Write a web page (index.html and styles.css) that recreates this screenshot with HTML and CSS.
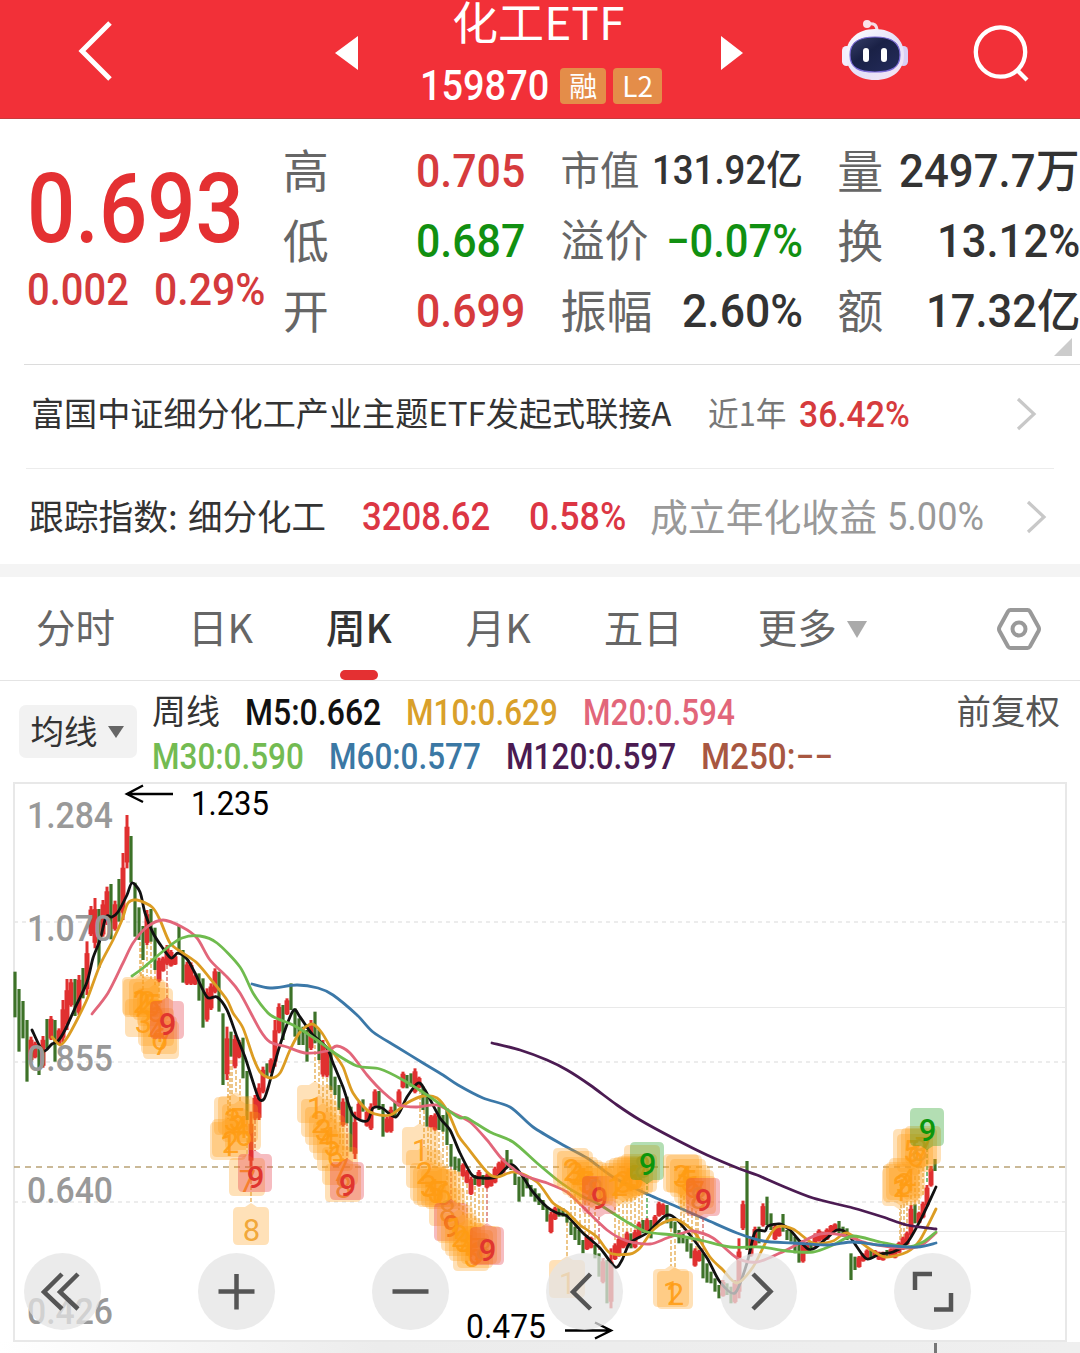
FILE: index.html
```html
<!DOCTYPE html>
<html lang="zh-CN">
<head>
<meta charset="utf-8">
<title>化工ETF 159870</title>
<link rel="stylesheet" href="styles.css">
</head>
<body>
<header class="topbar">
  <svg class="back" width="38" height="62" viewBox="0 0 38 62"><path d="M33 3 5 31 33 59" fill="none" stroke="#fff" stroke-width="5"/></svg>
  <svg class="prev" width="23" height="34" viewBox="0 0 23 34"><path d="M23 0V34L0 17Z" fill="#fff"/></svg>
  <div class="title">
    <h1><span data-fit="172">化工ETF</span></h1>
    <div class="code"><span class="num" data-fit="129">159870</span><i>融</i><i>L2</i></div>
  </div>
  <svg class="next" width="23" height="34" viewBox="0 0 23 34"><path d="M0 0V34L22 17Z" fill="#fff"/></svg>
  <svg class="robot" width="68" height="64" viewBox="0 0 68 64">
    <defs>
      <linearGradient id="shell" x1="0" y1="0" x2="1" y2="1"><stop offset="0" stop-color="#fff"/><stop offset=".55" stop-color="#e4e0f8"/><stop offset="1" stop-color="#f6e6f4"/></linearGradient>
      <linearGradient id="face" x1="0" y1="0" x2="1" y2="1"><stop offset="0" stop-color="#38406a"/><stop offset=".4" stop-color="#1a2146"/><stop offset="1" stop-color="#242c5c"/></linearGradient>
    </defs>
    <path d="M27 6Q36 4 36 13" fill="none" stroke="#f4dce6" stroke-width="3"/>
    <circle cx="26" cy="6" r="4" fill="#fbe3ea"/>
    <rect x="1" y="28" width="9" height="20" rx="4.500" fill="#f3ecfc"/><rect x="58" y="28" width="9" height="20" rx="4.500" fill="#d9cff5"/>
    <path d="M34 11C52 11 63 22 63 37S52 62 34 62 5 52 5 37 16 11 34 11Z" fill="url(#shell)"/>
    <path d="M34 19C50 19 59 24 59 37S50 54 34 54 9 50 9 37 18 19 34 19Z" fill="url(#face)" stroke="#7c6bd8" stroke-width="1.200"/>
    <rect x="22" y="30" width="6" height="14" rx="3" fill="#fff"/><rect x="40" y="30" width="6" height="14" rx="3" fill="#fff"/>
  </svg>
  <svg class="search" width="58" height="58" viewBox="0 0 58 58"><g fill="none" stroke="#fff" stroke-width="4.300"><circle cx="27.500" cy="27" r="24.700"/><path d="M43 44 54 55"/></g></svg>
</header>

<section class="quote">
  <div class="last">
    <div class="price num"><span data-fit="217">0.693</span></div>
    <div class="change num"><span data-fit="102">0.002</span><span data-fit="111">0.29%</span></div>
  </div>
  <dl class="stats first">
    <dt>高</dt><dd class="num up"><span data-fit="109">0.705</span></dd>
    <dt>低</dt><dd class="num down"><span data-fit="109">0.687</span></dd>
    <dt>开</dt><dd class="num up"><span data-fit="109">0.699</span></dd>
  </dl>
  <dl class="stats second">
    <dt class="s">市值</dt><dd class="num s"><span data-fit="151">131.92亿</span></dd>
    <dt class="m">溢价</dt><dd class="num down m"><span data-fit="137">−0.07%</span></dd>
    <dt>振幅</dt><dd class="num"><span data-fit="121">2.60%</span></dd>
  </dl>
  <dl class="stats third">
    <dt>量</dt><dd class="num"><span data-fit="181">2497.7万</span></dd>
    <dt>换</dt><dd class="num"><span data-fit="143">13.12%</span></dd>
    <dt>额</dt><dd class="num"><span data-fit="154">17.32亿</span></dd>
  </dl>
  <b class="corner"></b>
</section>

<section class="link fund">
  <span class="name" data-fit="640">富国中证细分化工产业主题ETF发起式联接A</span>
  <span class="period" data-fit="78">近1年</span>
  <span class="num up" data-fit="111">36.42%</span>
  <svg width="22" height="34" viewBox="0 0 22 34"><path d="M2 2 18 17 2 32" fill="none" stroke="#c8c8c8" stroke-width="3.200"/></svg>
</section>
<section class="link index">
  <span class="label" data-fit="149">跟踪指数:</span>
  <span class="name" data-fit="138">细分化工</span>
  <span class="num up" data-fit="128">3208.62</span>
  <span class="num up rate" data-fit="97">0.58%</span>
  <span class="since" data-fit="227">成立年化收益</span>
  <span class="num annual" data-fit="97">5.00%</span>
  <svg width="22" height="34" viewBox="0 0 22 34"><path d="M2 2 18 17 2 32" fill="none" stroke="#c8c8c8" stroke-width="3.200"/></svg>
</section>

<nav class="tabs">
  <a>分时</a><a>日K</a><a class="on">周K</a><a>月K</a><a>五日</a><a>更多<b></b></a>
  <svg width="46" height="44" viewBox="0 0 46 44"><g fill="none" stroke="#999" stroke-width="4"><path d="M14.500 3H31.500Q33 3 34 4.500L42.500 20Q43.500 22 42.500 24L34 39.500Q33 41 31.500 41H14.500Q13 41 12 39.500L3.500 24Q2.500 22 3.500 20L12 4.500Q13 3 14.500 3Z"/><circle cx="23" cy="22" r="6.500"/></g></svg>
</nav>

<section class="averages">
  <button class="pick">均线<b></b></button>
  <div class="legend">
    <div><em>周线</em><span class="num k5" data-fit="136">M5:0.662</span><span class="num k10" data-fit="152">M10:0.629</span><span class="num k20" data-fit="152">M20:0.594</span></div>
    <div><span class="num k30" data-fit="152">M30:0.590</span><span class="num k60" data-fit="152">M60:0.577</span><span class="num k120" data-fit="170">M120:0.597</span><span class="num k250" data-fit="132">M250:−−</span></div>
  </div>
  <span class="adjust">前复权</span>
</section>

<main class="chart">
  <svg id="kline" width="1080" height="572" viewBox="0 781 1080 572"></svg>
  <div class="tools">
    <button><svg viewBox="0 0 77 77"><path d="M38 21 20 39 38 56M54 21 36 39 54 56"/></svg></button>
    <button><svg viewBox="0 0 77 77"><path d="M38.500 21V56.500M20.500 38.500H56.500"/></svg></button>
    <button><svg viewBox="0 0 77 77"><path d="M20.500 38.500H56.500"/></svg></button>
    <button><svg viewBox="0 0 77 77"><path d="M44.500 21 27 39 44.500 56"/></svg></button>
    <button><svg viewBox="0 0 77 77"><path d="M33 21 50.500 38.500 33 56"/></svg></button>
    <button><svg viewBox="0 0 77 77"><path d="M38 21H21V37M57 40V56.500H40"/></svg></button>
  </div>
</main>
<script src="chart.js"></script>
</body>
</html>
```
FILE: styles.css
```css
* { box-sizing: border-box; margin: 0; padding: 0; }
body { width: 1080px; height: 1353px; overflow: hidden; background: #fff; color: #333; font-family: "Noto Sans CJK SC", sans-serif; font-weight: 400; }
svg { display: block; flex: none; }
i, em { font-style: normal; }
button { border: 0; font: inherit; color: inherit; }
span { white-space: nowrap; }
.num { font-family: Roboto, "Noto Sans CJK SC", sans-serif; font-weight: 500; }
.up { color: #d63b3d; }
.down { color: #119011; }
[data-fit] { display: inline-block; transform-origin: left center; }

.topbar { display: flex; align-items: flex-start; height: 119px; background: #f23038; border-bottom: 1px solid #c93a3c; color: #fff; }
.back { margin: 20px 0 0 77px; }
.prev { margin: 36px 0 0 220px; }
.title { width: 242px; margin-left: 62px; }
h1 { height: 48px; padding-left: 32px; font-size: 45px; line-height: 42px; font-weight: 400; }
.code { display: flex; align-items: center; height: 76px; font-size: 42px; line-height: 48px; }
.code i { height: 36px; padding: 0 9px; margin: -1px 0 0 11px; border-radius: 4px; background: #e48d49; font-size: 28px; line-height: 34px; }
.code i + i { margin-left: 7px; }
.next { margin: 36px 0 0 59px; }
.robot { margin: 18px 0 0 97px; }
.search { margin: 25px 0 0 64px; }

.quote { display: flex; position: relative; height: 246px; }
.quote::after { content: ""; position: absolute; left: 24px; right: 0; bottom: 0; height: 1px; background: #dcdcdc; }
.last { width: 285px; padding: 43px 0 0 27px; color: #e43032; }
.price { font-size: 96px; line-height: 94px; }
.change { display: flex; gap: 25px; margin-top: 8px; font-size: 45px; line-height: 52px; color: #d43a3c; }
.stats { display: grid; grid-template-columns: auto auto; grid-template-rows: repeat(3, 70px); justify-content: space-between; align-items: center; height: 210px; margin-top: 17px; font-size: 46px; line-height: 70px; }
dt { color: #666; margin-top: -7px; white-space: nowrap; }
dt.s { font-size: 39.500px; }
dt.m { font-size: 44px; }
dd { text-align: right; white-space: nowrap; }
dd.s { font-size: 40px; }
.first { width: 243px; margin-left: -2px; }
.second { width: 243px; margin-left: 35px; }
.third { width: 243px; margin-left: 34px; }
.corner { position: absolute; right: 8px; bottom: 9px; border: 9px solid transparent; border-right-color: #ccc; border-bottom-color: #ccc; }

.link { display: flex; align-items: center; }
.link > span { margin-top: -4px; }
.link > span.num { margin-top: 1px; }
.fund { height: 104px; margin: 0 26px; padding: 0 16px 6px 5px; border-bottom: 1px solid #ececec; font-size: 33px; }
.period { margin-left: 37px; color: #777; }
.link .num { font-size: 37px; font-weight: 500; }
.fund .num { margin-left: 12px; }
.fund svg { margin-left: auto; }
.index { height: 95px; padding: 0 32px 0 29px; font-size: 35px; }
.index .name { margin-left: 10px; }
.index .num { margin-left: 36px; font-size: 38px; color: #dc3644; }
.index .rate { margin-left: 39px; }
.since { margin-left: 24px; font-size: 38px; color: #999; }
.index .annual { margin-left: 10px; color: #999; font-weight: 400; }
.index svg { margin-left: auto; }

.tabs { display: flex; align-items: center; position: relative; height: 117px; padding: 13px 38px 0 36px; border-bottom: 1px solid #e4e4e4; background: linear-gradient(#f4f4f4 13px, #fff 13px); font-size: 39.500px; color: #666; }
.tabs a { position: relative; line-height: 60px; margin-top: -6px; white-space: nowrap; }
.tabs a:nth-child(2) { margin-left: 73px; }
.tabs a:nth-child(3) { margin-left: 73px; }
.tabs a:nth-child(4) { margin-left: 74px; }
.tabs a:nth-child(5) { margin-left: 73px; }
.tabs a:nth-child(6) { margin-left: 75px; }
.tabs svg { margin-left: auto; }
.tabs b { display: inline-block; margin: 0 0 5px 10px; border: 10px solid transparent; border-top: 17px solid #aaa; border-bottom: 0; }
.tabs .on { color: #333; font-weight: 500; }
.on::after { content: ""; position: absolute; left: 14px; bottom: -24px; width: 38px; height: 10px; border-radius: 5px; background: #e43032; }

.averages { display: flex; height: 100px; padding: 0 20px 0 19px; }
.pick { width: 118px; height: 53px; margin-top: 24px; padding: 0 2px 3px 0; border-radius: 7px; background: #f2f2f2; font-size: 33.500px; line-height: 50px; white-space: nowrap; }
.pick b { display: inline-block; margin: 0 0 6px 10px; border: 8px solid transparent; border-top: 12px solid #666; border-bottom: 0; }
.legend { margin: 10px 0 0 15px; }
.legend div { display: flex; align-items: center; height: 44px; gap: 25px; font-size: 36px; }
.legend em { margin-top: -7px; font-size: 34px; }
.adjust { margin: 3px 0 0 auto; font-size: 34.500px; line-height: 50px; color: #555; }
.k5 { color: #111; }
.k10 { color: #d9a02a; }
.k20 { color: #e2667a; }
.k30 { color: #73bb52; }
.k60 { color: #3b78a4; }
.k120 { color: #4b1b52; }
.k250 { color: #a85741; }

.chart { position: relative; height: 572px; }
.tools { position: absolute; left: 24px; top: 472px; display: flex; gap: 97px; }
.tools button { width: 77px; height: 77px; border-radius: 50%; background: rgba(228, 228, 228, .74); }
.tools path { fill: none; stroke: #555; stroke-width: 4.500; }
#kline text { font-family: Roboto, sans-serif; }
```
FILE: chart.js
```js
// Squeeze labels to the widths reserved for them.
document.querySelectorAll('[data-fit]').forEach(el => {
  const natural = el.offsetWidth, target = +el.dataset.fit;
  el.style.transform = `scaleX(${target / natural})`;
  el.style.marginRight = `${target - natural}px`;
});

const STEP = 4, LEFT = 15;
const RED = '#e03030', GREEN = '#3d7228';
// Weekly bars: colour, high-low in thirds of a pixel below the segment top.
const segments = [
  { top: 780, bars: 'g575-712 g627-815 g663-775 g720-905 r770-845 r785-835 g798-885 r768-863 g717-805 r708-780 g720-845 r745-795 r660-787 r597-750 r597-680 g597-708 r585-705 g564-655 r484-645 r378-468 r354-505 g387-563 r360-470 r320-435 g312-478 r362-452 g297-425 r219-420 r105-265 g168-308 g308-470 g382-480 g438-540 r390-495 g387-485 g443-570 r533-607 r530-575 r495-555 r510-560 r525-555 g438-510 g510-608 r545-615 r547-615' },
  { top: 960, bars: 'r45-75 g40-122 g55-203 r85-185 r70-150 r25-100 g35-155 g160-375 r200-360 g215-290 r225-325 r240-295 g233-355 g333-480 r455-620 r405-480 r370-480 r320-400 g310-350 r295-340 r180-320 r130-220 g135-240 r115-165 g70-150 g145-230 g175-255 g200-255 g210-305 r180-270 g155-250 g210-300 r240-350 r260-352 g270-390 g350-405 g375-450 r415-500 g410-490 g440-575 r455-597 r425-480 g418-455 r450-500 r430-510 r388-440 g393-450 g432-530 r470-518 r440-518 g425-470 r388-440 r335-385 g345-385 g340-380 r325-400 r350-385 g380-450 g410-500 r465-503 r460-512 g440-510 g465-515 g445-555' },
  { top: 1030, bars: 'g342-410 g380-420 g385-425 r400-440 r420-460 r440-495 g435-465 r420-470 g435-465 r430-475 r435-470 r410-460 r395-435 r385-430 g360-410 g388-420 g425-465 g440-515 g440-500 g440-475 g465-500 g475-515 g490-525 g510-540 g530-575 r545-610 r530-570 g530-560 g535-560 g550-578 g575-615 g590-630 g600-645 g630-670 r615-660 r620-655 g645-685 g670-740 r685-760 g690-820 r655-835 r640-690 r620-680 r625-655 r605-650 g610-655 r600-655 r575-625 g570-610 r565-610 g570-625 r555-595' },
  { top: 1090, bars: 'r335-380 r340-375 g345-400 g385-415 g395-430 g420-460 g430-460 g445-485 g460-505 r475-530 r480-515 g490-565 g520-578 g545-580 g565-605 g585-625 r570-620 g580-615 g590-640 r570-640 r445-625 r332-420 g213-480 r440-500 r410-470 g410-460 r340-410 g320-405 g370-420 r405-450 r410-440 g372-425 g420-450 g425-455 g440-490 g450-518 r450-518 r455-490 g455-475 r430-470 r418-455 r425-450 r415-450 r405-430 r400-425 g393-430 g410-440 g415-450 g490-570 g500-540 r498-533 r490-515 r478-510 g480-505 r480-500 r485-510 r485-512 g480-502 r475-500 r470-505 r455-490 r440-480 r425-465 r345-440 g343-400 r365-400 r335-385 r285-350 r228-290 g207-243' }
];

const averages = {
  '#111': '32,1030 43,1051 52,1044 58,1041 65,1030 75,1008 87,982 93,958 100,940 106,917 112,917 118,912 127,895 132,883 140,892 145,913 153,933 162,947 171,958 178,953 187,959 195,973 207,997 217,997 227,1010 237,1037 245,1057 253,1082 259,1099 264,1099 268,1088 280,1045 293,1011 300,1017 312,1034 327,1048 333,1063 343,1087 353,1115 367,1121 373,1108 382,1108 396,1117 407,1097 418,1083 425,1090 440,1118 450,1130 460,1153 472,1175 483,1178 497,1177 513,1165 533,1192 547,1207 557,1213 567,1216 583,1233 600,1248 615,1267 622,1260 630,1243 647,1233 665,1216 675,1218 690,1235 707,1258 720,1282 735,1293 747,1263 755,1232 765,1231 768,1226 780,1224 790,1230 797,1238 808,1249 815,1248 827,1238 837,1230 847,1233 857,1247 867,1259 880,1254 893,1252 907,1243 922,1217 936,1187',
  '#dc9c22': '52,1037 60,1045 67,1038 78,1018 88,997 100,965 113,940 122,920 128,903 137,900 152,907 160,920 170,943 183,953 197,963 213,982 227,1000 233,1013 243,1028 253,1057 260,1072 270,1078 280,1073 290,1050 300,1032 312,1024 322,1033 333,1052 343,1067 353,1093 370,1112 390,1115 407,1103 423,1096 437,1098 448,1112 458,1135 467,1147 487,1172 497,1177 515,1172 537,1182 553,1203 567,1212 580,1225 597,1237 610,1253 630,1254 640,1248 653,1230 667,1221 678,1220 695,1233 710,1257 723,1270 737,1283 753,1267 767,1240 777,1227 793,1229 813,1243 833,1241 847,1233 867,1247 885,1257 907,1252 920,1240 936,1209',
  '#e2667a': '92,1014 108,993 123,963 133,943 147,927 163,920 182,927 197,938 210,960 227,977 240,993 260,1030 270,1042 287,1047 305,1053 327,1051 337,1046 350,1053 367,1075 383,1092 400,1105 417,1107 437,1105 453,1113 470,1122 487,1140 503,1160 523,1175 547,1183 567,1192 583,1207 607,1230 627,1241 650,1244 667,1238 683,1233 693,1231 713,1238 737,1258 757,1262 780,1253 800,1243 820,1234 843,1235 867,1243 900,1248 920,1246 936,1233',
  '#6fbb4e': '132,976 143,968 167,948 182,938 200,936 217,943 240,967 253,993 268,1013 278,1019 293,1025 317,1040 333,1052 357,1066 380,1069 403,1080 430,1097 458,1117 467,1118 490,1132 513,1142 537,1163 560,1182 580,1195 600,1205 627,1222 647,1232 673,1235 700,1240 730,1247 760,1247 787,1251 813,1252 833,1245 853,1236 880,1242 907,1247 923,1242 936,1232',
  '#3b78a8': '252,984 270,988 297,985 318,988 333,995 357,1015 373,1032 397,1047 423,1063 443,1075 458,1085 483,1098 510,1107 533,1127 563,1145 587,1158 613,1177 647,1194 673,1205 707,1220 737,1233 763,1241 793,1243 827,1245 853,1242 880,1245 917,1247 936,1243',
  '#4b1b52': '492,1043 520,1050 547,1060 567,1070 590,1085 617,1105 640,1120 673,1138 707,1155 740,1169 757,1175 780,1185 813,1198 853,1208 883,1217 907,1225 936,1229'
};

// Sequence marks: x, box top, digit, tone (o/r/g), side of the pointer (u = on top, d = below), bar end of the leader.
const marks = [
  [140, 977, 1, 'o', 'u', 942], [141, 979, 2, 'o', 'u', 948], [143, 999, 3, 'o', 'u', 944], [147, 979, 2, 'o', 'u', 945], [151, 982, 5, 'o', 'u', 940], [155, 988, 5, 'o', 'u', 970], [156, 1008, 4, 'o', 'u', 0], [159, 1016, 6, 'o', 'u', 982], [161, 1021, 7, 'o', 'u', 0], [167, 1001, 9, 'r', 'u', 965],
  [228, 1122, 1, 'o', 'u', 1058], [230, 1119, 2, 'o', 'u', 1060], [232, 1097, 3, 'o', 'u', 1060], [236, 1096, 5, 'o', 'u', 1058], [240, 1104, 4, 'o', 'u', 1079], [243, 1112, 6, 'o', 'u', 0], [247, 1158, 7, 'o', 'u', 1120], [251, 1207, 8, 'o', 'u', 1168], [255, 1154, 9, 'r', 'u', 1120],
  [315, 1085, 1, 'o', 'u', 1045], [319, 1099, 2, 'o', 'u', 1060], [323, 1107, 3, 'o', 'u', 1075], [327, 1115, 4, 'o', 'u', 1078], [331, 1122, 5, 'o', 'u', 1088], [335, 1133, 6, 'o', 'u', 1095], [340, 1147, 7, 'o', 'u', 1110], [343, 1164, 8, 'o', 'u', 1128], [347, 1162, 9, 'r', 'u', 1122],
  [420, 1127, 1, 'o', 'u', 1090], [424, 1150, 2, 'o', 'u', 1110], [428, 1163, 3, 'o', 'u', 1127], [431, 1167, 4, 'o', 'u', 1128], [435, 1169, 5, 'o', 'u', 1130], [439, 1169, 7, 'o', 'u', 1132], [443, 1171, 6, 'o', 'u', 1130], [447, 1188, 8, 'o', 'u', 1146], [451, 1203, 9, 'r', 'u', 1166], [455, 1205, 1, 'o', 'u', 1170], [459, 1213, 2, 'o', 'u', 1172], [463, 1218, 3, 'o', 'u', 1176], [467, 1223, 4, 'o', 'u', 1184], [471, 1233, 5, 'o', 'u', 1196], [475, 1230, 6, 'o', 'u', 1186], [479, 1226, 7, 'o', 'u', 1188], [483, 1226, 8, 'o', 'u', 1188], [487, 1227, 9, 'r', 'u', 1188],
  [567, 1260, 1, 'o', 'u', 1222], [571, 1148, 2, 'o', 'd', 1222], [575, 1151, 3, 'o', 'd', 1228], [580, 1157, 4, 'o', 'd', 1230], [585, 1160, 5, 'o', 'd', 1235], [589, 1162, 6, 'o', 'd', 1235], [591, 1166, 7, 'o', 'd', 0], [595, 1168, 8, 'o', 'd', 1240], [599, 1176, 9, 'r', 'd', 1250], [615, 1166, 1, 'o', 'd', 1240], [619, 1163, 2, 'o', 'd', 1236], [623, 1160, 3, 'o', 'd', 1238], [627, 1158, 4, 'o', 'd', 1232], [631, 1157, 5, 'o', 'd', 1232], [635, 1156, 6, 'o', 'd', 1230], [639, 1154, 7, 'o', 'd', 1226], [642, 1145, 8, 'o', 'd', 1222], [647, 1142, 9, 'g', 'd', 1220],
  [671, 1269, 1, 'o', 'u', 1228], [675, 1271, 2, 'o', 'u', 1233], [681, 1154, 3, 'o', 'd', 1228], [684, 1155, 4, 'o', 'd', 1230], [688, 1159, 5, 'o', 'd', 1234], [692, 1165, 6, 'o', 'd', 1242], [696, 1170, 7, 'o', 'd', 1250], [698, 1176, 8, 'o', 'd', 1250], [703, 1178, 9, 'r', 'd', 1252],
  [900, 1168, 1, 'o', 'd', 1240], [901, 1164, 2, 'o', 'd', 1238], [904, 1162, 3, 'o', 'd', 1238], [907, 1158, 4, 'o', 'd', 1235], [911, 1129, 5, 'o', 'd', 1205], [915, 1134, 6, 'o', 'd', 1210], [919, 1128, 8, 'o', 'd', 1210], [923, 1126, 7, 'o', 'd', 1195], [927, 1108, 9, 'g', 'd', 1182]
];

const spline = text => {
  const p = text.split(' ').map(s => s.split(',').map(Number));
  let d = `M${p[0]}`;
  for (let i = 0; i < p.length - 1; i++) {
    const a = p[i - 1] || p[i], b = p[i], c = p[i + 1], e = p[i + 2] || c;
    d += `C${b[0] + (c[0] - a[0]) / 7} ${b[1] + (c[1] - a[1]) / 7} ${c[0] - (e[0] - b[0]) / 7} ${c[1] - (e[1] - b[1]) / 7} ${c}`;
  }
  return d;
};

let out = '<defs><linearGradient id="foot"><stop offset="0" stop-color="#fff"/><stop offset=".35" stop-color="#ececec"/><stop offset="1" stop-color="#efefef"/></linearGradient></defs>';
out += '<rect x="0" y="1342" width="1080" height="11" fill="url(#foot)"/><path d="M935.500 1343V1353" stroke="#777" stroke-width="3"/>';
out += '<rect x="14" y="783" width="1052" height="558" fill="none" stroke="#e8e8e8" stroke-width="2"/>';
out += '<path d="M300 1007.500H1066M760 1231.500H1066" stroke="#e9e9e9" fill="none"/>';
out += '<path d="M14 922H1066M14 1062H1066M14 1202H1066" stroke="#e6e6e6" stroke-width="1.500" stroke-dasharray="4 4"/>';
out += '<path d="M14 1167H1066" stroke="#b9a276" stroke-width="1.700" stroke-dasharray="6 5"/>';

const tone = { o: ['#ff9d14', '#f0a028'], r: ['#e2303c', '#e0352f'], g: ['#149914', '#0b960b'] };
for (const [x, y, , t, side, end] of marks) {
  if (!end) continue;
  const c = t === 'r' ? '#dc8078' : t === 'g' ? '#5ab060' : '#e9b86c';
  out += `<path d="M${x} ${end}V${side === 'u' ? y - 3 : y + 41}" stroke="${c}" stroke-width="1.600" stroke-dasharray="4 2"/>`;
}

let index = 0;
for (const { top, bars } of segments) {
  for (const bar of bars.split(' ')) {
    const x = LEFT + STEP * index++;
    const [hi, lo] = bar.slice(1).split('-').map(v => top + v / 3);
    if (bar[0] === 'g') out += `<path d="M${x} ${hi}V${lo}" stroke="${GREEN}" stroke-width="3.200"/>`;
    else {
      const pad = (lo - hi) * (lo - hi > 40 ? .22 : .12);
      out += `<path d="M${x} ${hi}V${lo}" stroke="${RED}" stroke-width="3"/><path d="M${x} ${hi + pad}V${lo - pad / 2}" stroke="${RED}" stroke-width="5"/>`;
    }
  }
}
for (const [color, pts] of Object.entries(averages)) {
  out += `<path d="${spline(pts)}" fill="none" stroke="${color}" stroke-width="2.800" stroke-linecap="round"/>`;
}
for (const [x, y, n, t, side] of marks) {
  const w = t === 'o' ? 18 : 17;
  const l = x - w, r = x + w, b = y + 38;
  const up = side === 'u' ? `H${x - 6}L${x} ${y - 4}L${x + 6} ${y}` : '';
  const dn = side === 'd' ? `H${x + 6}L${x} ${b + 4}L${x - 6} ${b}` : '';
  out += `<path d="M${l + 5} ${y}${up}H${r - 5}Q${r} ${y} ${r} ${y + 5}V${b - 5}Q${r} ${b} ${r - 5} ${b}${dn}H${l + 5}Q${l} ${b} ${l} ${b - 5}V${y + 5}Q${l} ${y} ${l + 5} ${y}Z" fill="${tone[t][0]}" fill-opacity="${t === 'o' ? .3 : .32}"/>`;
  out += `<text x="${x + .5}" y="${y + (side === 'u' ? 33.5 : 32.5)}" text-anchor="middle" font-size="31" fill="${t === 'o' && n !== 8 ? '#ff9d14' : tone[t][1]}" fill-opacity="${t === 'o' ? .9 : 1}" font-weight="${t === 'o' ? 400 : 500}">${n}</text>`;
}
for (const [v, y] of [['1.284', 828], ['1.070', 941], ['0.855', 1071], ['0.640', 1203], ['0.426', 1324]]) {
  out += `<text x="27" y="${y}" font-size="37.500" font-weight="500" fill="#999" textLength="86" lengthAdjust="spacingAndGlyphs">${v}</text>`;
}
out += '<g font-size="33" fill="#000"><text x="191" y="815" textLength="78" lengthAdjust="spacingAndGlyphs">1.235</text><text x="466" y="1338" textLength="80" lengthAdjust="spacingAndGlyphs">0.475</text></g>';
out += '<path d="M173 794H127M143 785.500 127 794 143 802M565 1330.500H611M595 1322.500 611 1330.500 595 1338.500" fill="none" stroke="#000" stroke-width="2.400"/>';
document.getElementById('kline').innerHTML = out;
```
